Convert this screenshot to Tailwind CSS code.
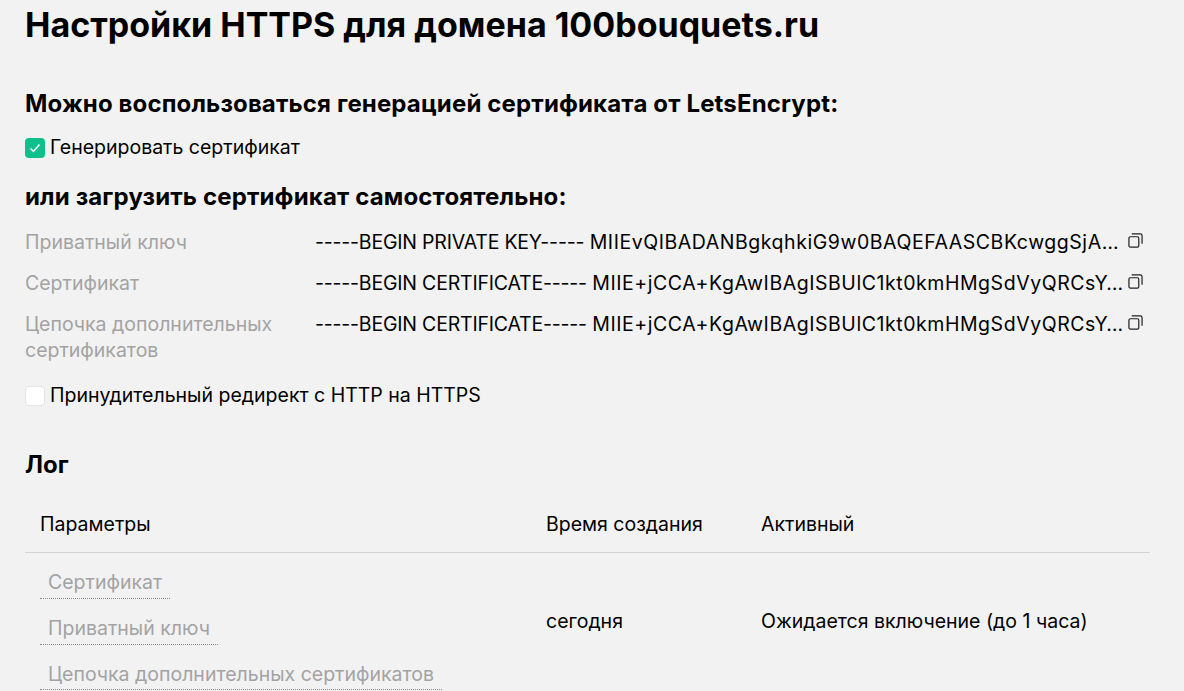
<!DOCTYPE html>
<html lang="ru">
<head>
  <meta charset="UTF-8" />
  <title>Настройки HTTPS</title>
  <script src="https://cdn.jsdelivr.net/npm/@tailwindcss/browser@4"></script>
</head>
<body class="h-[691px] overflow-hidden bg-[#f2f2f2] text-black font-['Inter',sans-serif] text-[19.5px]">
  <div class="w-[1150px] pl-[25px]">
    <h1 class="text-[34px] leading-[40px] font-bold mt-[5px]">Настройки HTTPS для домена 100bouquets.ru</h1>

    <h2 class="text-[24px] leading-[28px] font-bold tracking-[0.15px] mt-[45px]">Можно воспользоваться генерацией сертификата от LetsEncrypt:</h2>
    <label class="flex items-center gap-[5px] mt-[18px] h-[24px]">
      <span class="w-[20px] h-[20px] rounded-[4px] bg-[#10c08c] flex items-center justify-center">
        <svg class="w-[14px] h-[14px]" viewBox="0 0 14 14" fill="none" stroke="white" stroke-width="1.5"><path d="M2.5 7.5 L5.5 10.5 L11.5 3.5"/></svg>
      </span>
      <span>Генерировать сертификат</span>
    </label>

    <h2 class="text-[24px] leading-[28px] font-bold tracking-[0.15px] mt-[23px]">или загрузить сертификат самостоятельно:</h2>

    <div class="mt-[18px] flex flex-col gap-[15px]">
      <div class="flex">
        <div class="w-[290px] text-[#a3a3a3] leading-[26px]">Приватный ключ</div>
        <div class="w-[798px] whitespace-nowrap leading-[26px]"><span class="tracking-[-0.2px]">-----BEGIN PRIVATE KEY-----</span> <span class="tracking-[0.55px]">MIIEvQIBADANBgkqhkiG9w0BAQEFAASCBKcwggSjA…</span></div>
        <svg class="w-[15px] h-[15px] ml-[15px] mt-[4px]" viewBox="0 0 16 16" fill="none" stroke="#222" stroke-width="1.3"><rect x="1" y="4" width="10.5" height="11" rx="1.5"/><path d="M4 1 H13 a2 2 0 0 1 2 2 V11.5"/></svg>
      </div>
      <div class="flex">
        <div class="w-[290px] text-[#a3a3a3] leading-[26px]">Сертификат</div>
        <div class="w-[798px] whitespace-nowrap leading-[26px]"><span class="tracking-[-0.2px]">-----BEGIN CERTIFICATE-----</span> <span class="tracking-[0.55px]">MIIE+jCCA+KgAwIBAgISBUlC1kt0kmHMgSdVyQRCsY…</span></div>
        <svg class="w-[15px] h-[15px] ml-[15px] mt-[4px]" viewBox="0 0 16 16" fill="none" stroke="#222" stroke-width="1.3"><rect x="1" y="4" width="10.5" height="11" rx="1.5"/><path d="M4 1 H13 a2 2 0 0 1 2 2 V11.5"/></svg>
      </div>
      <div class="flex">
        <div class="w-[290px] text-[#a3a3a3] leading-[26px]">Цепочка дополнительных<br>сертификатов</div>
        <div class="w-[798px] whitespace-nowrap leading-[26px] h-[26px]"><span class="tracking-[-0.2px]">-----BEGIN CERTIFICATE-----</span> <span class="tracking-[0.55px]">MIIE+jCCA+KgAwIBAgISBUlC1kt0kmHMgSdVyQRCsY…</span></div>
        <svg class="w-[15px] h-[15px] ml-[15px] mt-[4px]" viewBox="0 0 16 16" fill="none" stroke="#222" stroke-width="1.3"><rect x="1" y="4" width="10.5" height="11" rx="1.5"/><path d="M4 1 H13 a2 2 0 0 1 2 2 V11.5"/></svg>
      </div>
    </div>

    <label class="flex items-center gap-[5px] mt-[21px] h-[24px]">
      <span class="w-[20px] h-[20px] rounded-[4px] bg-white border border-[#e4e4e4]"></span>
      <span>Принудительный редирект с HTTP на HTTPS</span>
    </label>

    <h3 class="text-[24px] leading-[30px] font-bold mt-[42px]">Лог</h3>

    <div class="mt-[31px] flex h-[42px] border-b border-[#d4d4d4] pl-[15px] leading-[26px]">
      <div class="w-[506px]">Параметры</div>
      <div class="w-[215px]">Время создания</div>
      <div>Активный</div>
    </div>

    <div class="flex pl-[15px] items-center pb-[14px]">
      <div class="w-[506px] flex flex-col items-start text-[#a3a3a3]">
        <span class="px-[8px] mt-[16px] pb-[3px] leading-[26px] border-b border-dotted border-[#8a8a8a]">Сертификат</span>
        <span class="px-[8px] mt-[16px] pb-[3px] leading-[26px] border-b border-dotted border-[#8a8a8a]">Приватный ключ</span>
        <span class="px-[8px] mt-[16px] pb-[2px] leading-[26px] border-b border-dotted border-[#8a8a8a]">Цепочка дополнительных сертификатов</span>
      </div>
      <div class="w-[215px]">сегодня</div>
      <div>Ожидается включение (до 1 часа)</div>
    </div>
  </div>
</body>
</html>
